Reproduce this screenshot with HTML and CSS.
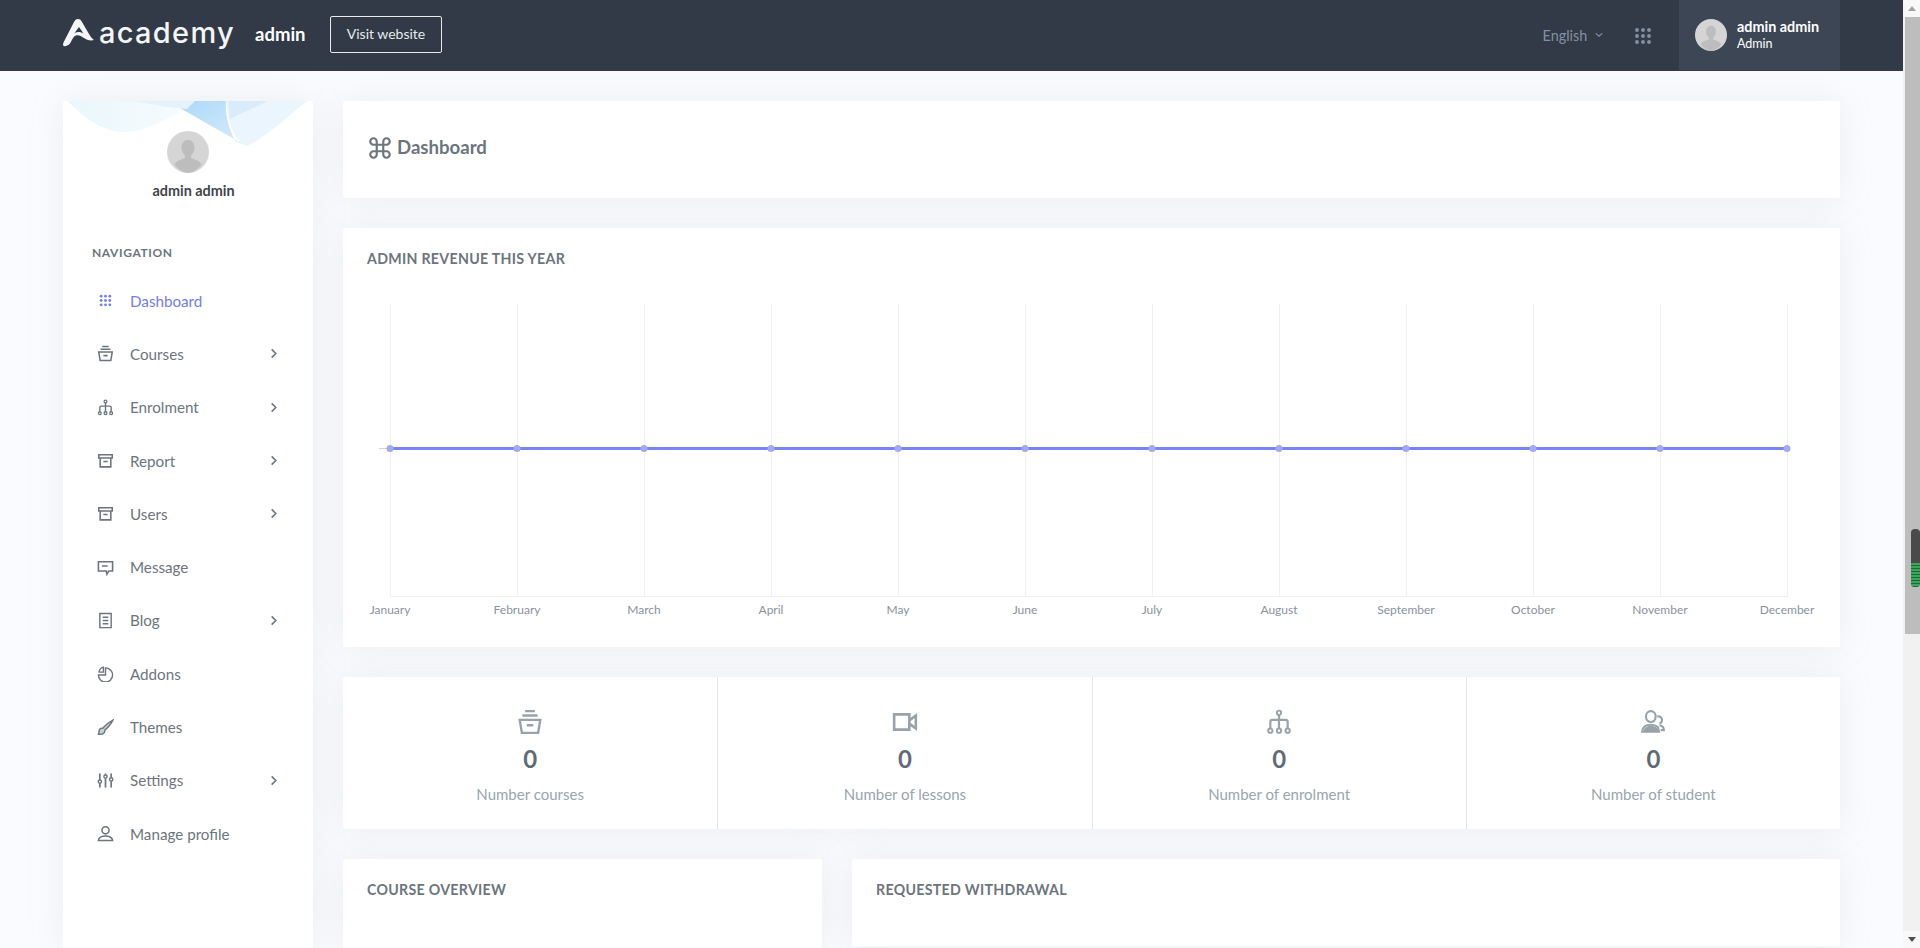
FILE: index.html
```html
<!DOCTYPE html>
<html lang="en">
<head>
  <meta charset="UTF-8" />
  <title>Academy - Admin Dashboard</title>
  <link rel="stylesheet" href="styles.css">
</head>
<body>

  <!-- icon sprite -->
  <svg class="sprite" xmlns="http://www.w3.org/2000/svg">
    <symbol id="i-grid" viewBox="0 0 24 24">
      <g fill="currentColor" stroke="none">
        <circle cx="4" cy="4" r="2.6"/><circle cx="12" cy="4" r="2.6"/><circle cx="20" cy="4" r="2.6"/>
        <circle cx="4" cy="12" r="2.6"/><circle cx="12" cy="12" r="2.6"/><circle cx="20" cy="12" r="2.6"/>
        <circle cx="4" cy="20" r="2.6"/><circle cx="12" cy="20" r="2.6"/><circle cx="20" cy="20" r="2.6"/>
      </g>
    </symbol>
    <symbol id="i-courses" viewBox="0 0 24 24">
      <path d="M7.500 2h9M5 6h14M2.500 10h19l-2 12h-15zM9 15h6" fill="none" stroke="currentColor" stroke-width="2.2"/>
    </symbol>
    <symbol id="i-enrol" viewBox="0 0 24 24">
      <path d="M12 5v15M12 10H6a2 2 0 0 0-2 2v6M12 10h6a2 2 0 0 1 2 2v6" fill="none" stroke="currentColor" stroke-width="2"/>
      <g fill="#fff" stroke="currentColor" stroke-width="1.8">
        <circle cx="12" cy="3.500" r="2"/><circle cx="4" cy="20" r="2"/><circle cx="12" cy="20" r="2"/><circle cx="20" cy="20" r="2"/>
      </g>
    </symbol>
    <symbol id="i-archive" viewBox="0 0 24 24">
      <path d="M2.500 4h19v4.500h-19zM4.500 8.500V21h15V8.500M9 13.500h6" fill="none" stroke="currentColor" stroke-width="2.2"/>
    </symbol>
    <symbol id="i-message" viewBox="0 0 24 24">
      <path d="M2 4h20v13h-5.500l-2.500 4.500-1-4.500H2zM7 10h8" fill="none" stroke="currentColor" stroke-width="2.2"/>
    </symbol>
    <symbol id="i-blog" viewBox="0 0 24 24">
      <path d="M4 2h16v20H4zM8 7.500h8M8 12h8M8 16.500h8" fill="none" stroke="currentColor" stroke-width="2"/>
    </symbol>
    <symbol id="i-pie" viewBox="0 0 24 24">
      <path d="M12 4a10 10 0 1 1-10 10h10zM3 10a8 8 0 0 1 6-7V10z" fill="none" stroke="currentColor" stroke-width="2"/>
    </symbol>
    <symbol id="i-brush" viewBox="0 0 24 24">
      <path d="M22.500 1.500C16 5 11 9.500 8.500 13c-3-.5-5 1-5.500 3.500-.3 2-.5 3.500-1 5 3 .3 6 0 7.500-1.500 1.500-1.500 1.800-3 1.500-4.500C14.500 13 19 8 22.500 1.500z" fill="currentColor" fill-opacity=".35" stroke="currentColor" stroke-width="2"/>
    </symbol>
    <symbol id="i-sliders" viewBox="0 0 24 24">
      <path d="M4 2v9M4 16v6M12 2v2M12 9v13M20 2v6M20 13v9" fill="none" stroke="currentColor" stroke-width="2.4"/>
      <g fill="none" stroke="currentColor" stroke-width="2">
        <circle cx="4" cy="13.500" r="2.300"/><circle cx="12" cy="6.500" r="2.300"/><circle cx="20" cy="10.500" r="2.300"/>
      </g>
    </symbol>
    <symbol id="i-profile" viewBox="0 0 24 24">
      <path d="M12 2.500a5 5 0 1 1 0 10 5 5 0 0 1 0-10zM2 22c0-4 4.500-6.500 10-6.500S22 18 22 22z" fill="none" stroke="currentColor" stroke-width="2.2"/>
    </symbol>
    <symbol id="i-video" viewBox="0 0 24 24">
      <path d="M2 5h14v14H2zM16 10.500 22 6v12l-6-4.500" fill="none" stroke="currentColor" stroke-width="2.4"/>
    </symbol>
    <symbol id="i-student" viewBox="0 0 24 24">
      <path d="M10 2a4.500 5 0 1 1 0 10 4.500 5 0 0 1 0-10zM2 21c0-4 3-6.500 8-6.500 3 0 5 .8 6.500 2.200l1 4.300zM16 7a3.300 3.300 0 1 1 2 6.300M18 15c2.200.4 4 1.800 4 4.500h-3" fill="none" stroke="currentColor" stroke-width="2"/>
      <path d="M3 21c0-3 3-5.500 7-5.500s6.500 2 7 5.500z" fill="currentColor" stroke="none"/>
    </symbol>
    <symbol id="i-chevron" viewBox="0 0 24 24">
      <path d="M8 3l9 9-9 9" fill="none" stroke="currentColor" stroke-width="3.4"/>
    </symbol>
    <symbol id="i-avatar" viewBox="0 0 42 42">
      <circle cx="21" cy="21" r="21" fill="#d5d5d5"/>
      <path d="M21 9c4 0 6.500 3 6.500 7.500 0 3.500-1.500 6.500-3.500 8v2.500c3 1.500 9 2.500 10.500 6.500A21 21 0 0 1 21 42a21 21 0 0 1-13.500-8.500C9 29.500 15 28.500 18 27v-2.500c-2-1.500-3.500-4.500-3.500-8C14.500 12 17 9 21 9z" fill="#bdbdbd"/>
    </symbol>
  </svg>

  <div class="page">
    <header class="topbar">
      <div class="topbar-left">
        <a class="logo">
          <svg class="logo-mark" viewBox="0 0 31 28"><path d="M15 0c2 0 3 1 4 3l7 12c1 2 3 4.500 5 6-4 1-7 0-10-2-3-2-5.500-3.500-8-2.500-3 1-3.500 4-6 8-1.500 2-7 4.500-7 1 0-1 .5-2 1-3L11 3c1-2 2-3 4-3z" fill="#f4f5f6"/><path d="M16 8l-4.500 6c3-1.500 6-1.500 9 .5z" fill="#313a46"/></svg>
          <span class="logo-text">academy</span>
        </a>
        <span class="topbar-title">admin</span>
        <a class="visit-btn">Visit website</a>
      </div>
      <div class="topbar-right">
        <span class="lang">English <svg class="lang-caret" viewBox="0 0 10 6"><path d="M1 1l4 3.500L9 1" fill="none" stroke="currentColor" stroke-width="1.5"/></svg></span>
        <svg class="apps-icon"><use href="#i-grid"/></svg>
        <div class="user-box">
          <svg class="user-avatar"><use href="#i-avatar"/></svg>
          <div>
            <div class="user-name">admin admin</div>
            <div class="user-role">Admin</div>
          </div>
        </div>
      </div>
    </header>

    <div class="wrapper">
      <aside class="sidebar">
        <svg class="wave" viewBox="0 0 250 46">
          <defs>
            <linearGradient id="wave-pale" x1="0" y1="0" x2="1" y2="0">
              <stop offset="0" stop-color="#eaf7fb"/>
              <stop offset="1" stop-color="#f6fbfe"/>
            </linearGradient>
            <linearGradient id="wave-blue" x1="0" y1="0" x2="1" y2="1">
              <stop offset="0" stop-color="#a9d6f8"/>
              <stop offset="1" stop-color="#d9eefc"/>
            </linearGradient>
          </defs>
          <path d="M4 0C20 14 35 30 60 31c20 0 40-11 60-21L104 0z" fill="url(#wave-pale)"/>
          <path d="M163 0h81c-19 15-39 35-60 45-12-5-19-20-21-45z" fill="#eaf5fd"/>
          <path d="M104 0h59c-1 12 2 25 9 40l12 5C160 32 130 14 104 0z" fill="url(#wave-blue)"/>
          <path d="M72 0h60l-8 8c-15-1-35-4-52-8z" fill="#e4f3fb"/>
          <path d="M165 0h40c-12 6-26 12-38 18z" fill="#d8ecfb"/>
        </svg>
        <div class="profile">
          <svg class="profile-avatar"><use href="#i-avatar"/></svg>
          <div class="profile-name">admin admin</div>
        </div>
        <div class="nav-title">Navigation</div>
        <ul class="nav">
          <li class="nav-item active"><svg class="nav-icon nav-icon-small"><use href="#i-grid"/></svg>Dashboard</li>
          <li class="nav-item"><svg class="nav-icon"><use href="#i-courses"/></svg>Courses<svg class="nav-arrow"><use href="#i-chevron"/></svg></li>
          <li class="nav-item"><svg class="nav-icon"><use href="#i-enrol"/></svg>Enrolment<svg class="nav-arrow"><use href="#i-chevron"/></svg></li>
          <li class="nav-item"><svg class="nav-icon"><use href="#i-archive"/></svg>Report<svg class="nav-arrow"><use href="#i-chevron"/></svg></li>
          <li class="nav-item"><svg class="nav-icon"><use href="#i-archive"/></svg>Users<svg class="nav-arrow"><use href="#i-chevron"/></svg></li>
          <li class="nav-item"><svg class="nav-icon"><use href="#i-message"/></svg>Message</li>
          <li class="nav-item"><svg class="nav-icon"><use href="#i-blog"/></svg>Blog<svg class="nav-arrow"><use href="#i-chevron"/></svg></li>
          <li class="nav-item"><svg class="nav-icon"><use href="#i-pie"/></svg>Addons</li>
          <li class="nav-item"><svg class="nav-icon"><use href="#i-brush"/></svg>Themes</li>
          <li class="nav-item"><svg class="nav-icon"><use href="#i-sliders"/></svg>Settings<svg class="nav-arrow"><use href="#i-chevron"/></svg></li>
          <li class="nav-item"><svg class="nav-icon"><use href="#i-profile"/></svg>Manage profile</li>
        </ul>
      </aside>

      <main class="content">
        <section class="card page-title">
          <svg class="title-icon" viewBox="0 0 24 24"><path d="M18 3a3 3 0 0 0-3 3v12a3 3 0 0 0 3 3 3 3 0 0 0 3-3 3 3 0 0 0-3-3H6a3 3 0 0 0-3 3 3 3 0 0 0 3 3 3 3 0 0 0 3-3V6a3 3 0 0 0-3-3 3 3 0 0 0-3 3 3 3 0 0 0 3 3h12a3 3 0 0 0 3-3 3 3 0 0 0-3-3z" fill="none" stroke="currentColor" stroke-width="2"/></svg>
          <h1>Dashboard</h1>
        </section>

        <section class="card chart-card">
          <h2 class="card-title">Admin revenue this year</h2>
          <svg class="chart" viewBox="0 0 1449 340">
            <g class="chart-grid">
              <path d="M23.500 14V306M150.500 14V306M277.500 14V306M404.500 14V306M531.500 14V306M658.500 14V306M785.500 14V306M912.500 14V306M1039.500 14V306M1166.500 14V306M1293.500 14V306M1420.500 14V306M23.500 306.500H1421"/>
            </g>
            <path d="M12 158.500H23" stroke="#c9cdf5" stroke-width="1"/>
            <path class="chart-line" d="M23 158.500H1421"/>
            <g class="chart-dots">
              <circle cx="23" cy="158.500" r="3.500"/><circle cx="150" cy="158.500" r="3.500"/><circle cx="277" cy="158.500" r="3.500"/>
              <circle cx="404" cy="158.500" r="3.500"/><circle cx="531" cy="158.500" r="3.500"/><circle cx="658" cy="158.500" r="3.500"/>
              <circle cx="785" cy="158.500" r="3.500"/><circle cx="912" cy="158.500" r="3.500"/><circle cx="1039" cy="158.500" r="3.500"/>
              <circle cx="1166" cy="158.500" r="3.500"/><circle cx="1293" cy="158.500" r="3.500"/><circle cx="1420" cy="158.500" r="3.500"/>
            </g>
            <g class="chart-labels">
              <text x="23" y="324">January</text><text x="150" y="324">February</text><text x="277" y="324">March</text>
              <text x="404" y="324">April</text><text x="531" y="324">May</text><text x="658" y="324">June</text>
              <text x="785" y="324">July</text><text x="912" y="324">August</text><text x="1039" y="324">September</text>
              <text x="1166" y="324">October</text><text x="1293" y="324">November</text><text x="1420" y="324">December</text>
            </g>
          </svg>
        </section>

        <section class="card stats">
          <div class="stat">
            <svg class="stat-icon"><use href="#i-courses"/></svg>
            <div class="stat-value">0</div>
            <div class="stat-label">Number courses</div>
          </div>
          <div class="stat">
            <svg class="stat-icon"><use href="#i-video"/></svg>
            <div class="stat-value">0</div>
            <div class="stat-label">Number of lessons</div>
          </div>
          <div class="stat">
            <svg class="stat-icon"><use href="#i-enrol"/></svg>
            <div class="stat-value">0</div>
            <div class="stat-label">Number of enrolment</div>
          </div>
          <div class="stat">
            <svg class="stat-icon"><use href="#i-student"/></svg>
            <div class="stat-value">0</div>
            <div class="stat-label">Number of student</div>
          </div>
        </section>

        <div class="bottom-row">
          <section class="card overview-card">
            <h2 class="card-title">Course overview</h2>
          </section>
          <section class="card withdrawal-card">
            <h2 class="card-title">Requested withdrawal</h2>
          </section>
        </div>
      </main>
    </div>
  </div>

  <div class="scrollbar">
    <div class="scroll-btn"><span class="arrow-up"></span></div>
    <div class="scroll-thumb">
      <div class="scroll-meter"><div class="scroll-meter-fill"></div></div>
    </div>
    <div class="scroll-rest"></div>
    <div class="scroll-btn"><span class="arrow-down"></span></div>
  </div>

</body>
</html>
```

FILE: styles.css
```css
body {
  margin: 0;
  height: 948px;
  display: flex;
  overflow: hidden;
  background-color: #fafbfe;
  color: #6c757d;
  font-family: "Lato", "Noto Sans", sans-serif;
  font-size: 15px;
}
.sprite {
  display: none;
}
.page {
  flex: 1;
  min-width: 0;
  display: flex;
  flex-direction: column;
}

/* top bar */
.topbar {
  height: 71px;
  flex-shrink: 0;
  display: flex;
  justify-content: space-between;
  padding: 0 63px;
  background-color: #313a46;
}
.topbar-left {
  display: flex;
  align-items: center;
}
.logo {
  display: flex;
  align-items: center;
  width: 192px;
  margin-top: -6px;
}
.logo-mark {
  width: 31px;
  height: 28px;
}
.logo-text {
  margin-left: 5px;
  font-family: "Inter", sans-serif;
  font-size: 29px;
  font-weight: 500;
  line-height: 34px;
  letter-spacing: 1.3px;
  color: #f4f5f6;
}
.topbar-title {
  width: 75px;
  margin-top: -3px;
  font-size: 18.5px;
  font-weight: 700;
  color: #fff;
}
.visit-btn {
  box-sizing: border-box;
  width: 112px;
  height: 37px;
  margin-top: -2px;
  border: 1px solid #e8e9eb;
  border-radius: 2px;
  font-size: 14px;
  line-height: 34px;
  text-align: center;
  color: #e8e9eb;
}
.topbar-right {
  display: flex;
  align-items: center;
}
.lang {
  font-size: 14.4px;
  color: #8391a2;
}
.lang-caret {
  width: 8px;
  height: 6px;
  margin: 0 0 3px 4px;
}
.apps-icon {
  width: 18px;
  height: 18px;
  margin: 0 27px 0 31px;
  color: #8391a2;
}
.user-box {
  box-sizing: border-box;
  width: 161px;
  height: 70px;
  align-self: flex-start;
  display: flex;
  align-items: center;
  padding-left: 16px;
  background-color: #3c4655;
  color: #fff;
}
.user-avatar {
  width: 32px;
  height: 32px;
  margin-right: 10px;
}
.user-name {
  margin-bottom: 1px;
  font-size: 14.4px;
  font-weight: 700;
  line-height: 17px;
}
.user-role {
  font-size: 12.5px;
  line-height: 16px;
}

/* layout */
.wrapper {
  flex: 1;
  min-height: 0;
  display: flex;
  gap: 30px;
  padding: 30px 63px 0;
  overflow: hidden;
}
.card {
  background-color: #fff;
  border-radius: 2px;
  box-shadow: 0 0 35px 0 rgba(154, 161, 171, 0.15);
}

/* sidebar */
.sidebar {
  position: relative;
  box-sizing: border-box;
  flex: 0 0 250px;
  height: 847px;
  background-color: #fff;
  border-radius: 2px;
  box-shadow: 0 0 35px 0 rgba(154, 161, 171, 0.15);
}
.wave {
  position: absolute;
  top: 0;
  left: 0;
  width: 250px;
  height: 46px;
}
.profile {
  position: relative;
  padding-top: 30px;
  text-align: center;
}
.profile-avatar {
  display: block;
  width: 42px;
  height: 42px;
  margin: 0 0 0 104px;
}
.profile-name {
  margin: 8px 0 0 11px;
  font-size: 14.4px;
  font-weight: 700;
  line-height: 20px;
  color: #3f4549;
}
.nav-title {
  margin: 44px 0 0 29px;
  font-size: 12px;
  font-weight: 700;
  line-height: 16px;
  letter-spacing: 0.6px;
  text-transform: uppercase;
}
.nav {
  list-style: none;
  margin: 13px 0 0;
  padding: 0;
}
.nav-item {
  display: flex;
  align-items: center;
  height: 53.3px;
  padding-left: 34px;
  font-size: 15.2px;
  color: #6c757d;
}
.nav-item.active {
  color: #727cf5;
}
.nav-icon {
  width: 17px;
  height: 17px;
  margin-right: 16px;
}
.nav-icon-small {
  width: 13px;
  height: 13px;
  margin: 0 18px 0 2px;
}
.nav-arrow {
  width: 11px;
  height: 11px;
  margin-left: auto;
  margin-right: 34px;
}

/* main column */
.content {
  flex: 1;
  min-width: 0;
  display: flex;
  flex-direction: column;
  gap: 30px;
}
.page-title {
  height: 97px;
  box-sizing: border-box;
  flex-shrink: 0;
  display: flex;
  align-items: center;
  padding: 0 24px 3px;
}
.title-icon {
  width: 26px;
  height: 26px;
  margin-right: 4px;
}
.page-title h1 {
  margin: 0 0 3px;
  font-size: 18.6px;
  font-weight: 700;
}
.card-title {
  margin: 0;
  font-size: 14.2px;
  font-weight: 700;
  line-height: 20px;
  letter-spacing: 0.3px;
  text-transform: uppercase;
}
.chart-card {
  height: 419px;
  flex-shrink: 0;
  box-sizing: border-box;
  padding: 21px 24px 0;
}
.chart {
  display: block;
  width: 1449px;
  height: 340px;
  margin-top: 21px;
}
.chart-grid path {
  fill: none;
  stroke: #eef0f4;
  stroke-width: 1;
}
.chart-line {
  fill: none;
  stroke: #727cf5;
  stroke-width: 3;
  opacity: 0.95;
}
.chart-dots circle {
  fill: #a3a9f2;
}
.chart-labels text {
  font-size: 12px;
  fill: #8a929d;
  text-anchor: middle;
}

/* stat cells */
.stats {
  height: 152px;
  flex-shrink: 0;
  display: grid;
  grid-template-columns: repeat(4, 1fr);
}
.stat {
  display: flex;
  flex-direction: column;
  align-items: center;
  padding-top: 32px;
  border-left: 1px solid #e3e6ea;
}
.stat:first-child {
  border-left: none;
}
.stat-icon {
  width: 26px;
  height: 26px;
  color: #98a2a9;
}
.stat-value {
  margin-top: 8px;
  font-size: 24px;
  font-weight: 700;
  line-height: 32px;
  color: #5f6b77;
}
.stat-label {
  margin-top: 9px;
  font-size: 15px;
  line-height: 20px;
  color: #98a6ad;
}

/* bottom cards */
.bottom-row {
  display: flex;
  align-items: flex-start;
  gap: 30px;
}
.overview-card {
  flex: 0 0 479px;
  height: 89px;
  padding: 21px 24px;
  box-sizing: border-box;
}
.withdrawal-card {
  flex: 1;
  height: 87px;
  padding: 21px 24px;
  box-sizing: border-box;
}

/* fake browser scrollbar */
.scrollbar {
  flex: 0 0 17px;
  display: flex;
  flex-direction: column;
  background-color: #f1f1f1;
}
.scroll-btn {
  height: 17px;
  flex-shrink: 0;
  display: flex;
  align-items: center;
  justify-content: center;
  background-color: #f8f8f8;
}
.arrow-up {
  border: 4px solid transparent;
  border-top: none;
  border-bottom: 5px solid #a3a3a3;
}
.arrow-down {
  border: 4px solid transparent;
  border-bottom: none;
  border-top: 5px solid #505050;
}
.scroll-thumb {
  height: 617px;
  flex-shrink: 0;
  margin-left: 2px;
  background-color: #bdbdbd;
  position: relative;
}
.scroll-meter {
  position: absolute;
  top: 512px;
  right: 0;
  width: 9px;
  height: 58px;
  border-radius: 4px;
  background-color: #4a4a4a;
  overflow: hidden;
}
.scroll-meter-fill {
  margin-top: 34px;
  height: 24px;
  background: repeating-linear-gradient(#3fa35c 0 2px, #1f6b38 2px 3px);
}
.scroll-rest {
  flex: 1;
}
```
